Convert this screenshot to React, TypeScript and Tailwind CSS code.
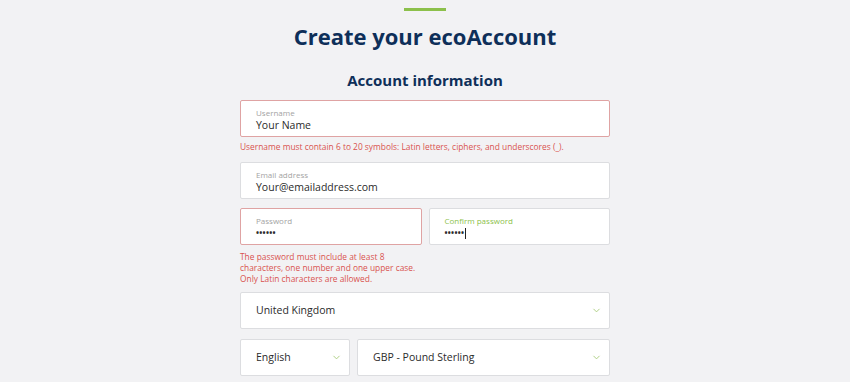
import { ChevronDown } from 'lucide-react';

const Field = ({ label, value, error, focus, pw }: { label: string; value: string; error?: boolean; focus?: boolean; pw?: boolean }) => (
  <div
    className={`h-[37px] bg-white rounded-[2px] border px-[15px] pt-[6px] flex flex-col ${
      error ? 'border-[#dfa3a3]' : 'border-[#dcdde0]'
    }`}
  >
    <span className={`text-[8px] leading-[11px] ${focus ? 'text-[#8cbf4a]' : 'text-[#a3a3a3]'}`}>{label}</span>
    <span className={`leading-[14px] text-[#2b2b2b] ${pw ? 'text-[8px] tracking-[0.3px] font-bold' : 'text-[10.5px]'}`}>
      {value}
      {focus && <span className="inline-block w-px h-[11px] bg-[#222] align-middle ml-px" />}
    </span>
  </div>
);

const Select = ({ value, className }: { value: string; className?: string }) => (
  <div className={`h-[37px] bg-white rounded-[2px] border border-[#dcdde0] pl-[15px] pr-[7px] flex items-center justify-between ${className ?? ''}`}>
    <span className="text-[10.5px] text-[#2b2b2b]">{value}</span>
    <ChevronDown size={11} strokeWidth={2} className="text-[#a8cc7c]" />
  </div>
);

export default function App() {
  return (
    <div className="w-[850px] h-[382px] overflow-hidden bg-[#f2f2f4] font-['Open_Sans',sans-serif]">
      <div className="w-[370px] mx-auto pt-[8px] flex flex-col">
        <div className="self-center w-[42px] h-[3px] bg-[#8cc04b]" />
        <h1 className="mt-[10px] text-center text-[22px] leading-[30px] font-bold text-[#0e2f59]">Create your ecoAccount</h1>
        <h2 className="mt-[19px] text-center text-[15px] leading-[20px] font-bold text-[#0e2f59]">Account information</h2>
        <div className="mt-[10px]">
          <Field label="Username" value="Your Name" error />
        </div>
        <p className="mt-[4px] text-[8.4px] leading-[12px] text-[#d9534f]">
          Username must contain 6 to 20 symbols: Latin letters, ciphers, and underscores (_).
        </p>
        <div className="mt-[9px]">
          <Field label="Email address" value="Your@emailaddress.com" />
        </div>
        <div className="mt-[9px] grid grid-cols-2 gap-[7px]">
          <div>
            <Field label="Password" value="••••••" error pw />
            <p className="mt-[6px] text-[8.4px] leading-[11px] text-[#d9534f]">
              The password must include at least 8
              <br />
              characters, one number and one upper case.
              <br />
              Only Latin characters are allowed.
            </p>
          </div>
          <div>
            <Field label="Confirm password" value="••••••" focus pw />
          </div>
        </div>
        <div className="mt-[8px]">
          <Select value="United Kingdom" />
        </div>
        <div className="mt-[10px] flex gap-[7px]">
          <Select value="English" className="w-[110px]" />
          <Select value="GBP - Pound Sterling" className="flex-1" />
        </div>
      </div>
    </div>
  );
}
